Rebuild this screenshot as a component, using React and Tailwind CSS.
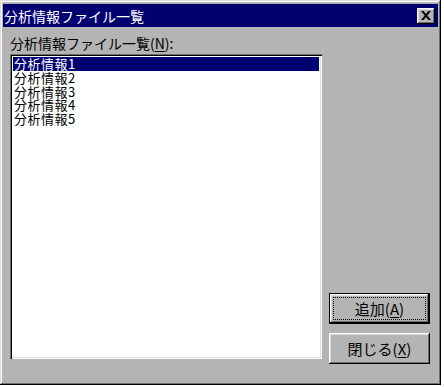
const FONT = { fontFamily: '"Noto Sans CJK JP", "Noto Sans", sans-serif' };

const items = ['分析情報1', '分析情報2', '分析情報3', '分析情報4', '分析情報5'];

function Button({ children, isDefault }) {
  if (isDefault) {
    return (
      <div className="w-[101px] h-[31px] bg-black p-px">
        <div className="w-full h-full bg-[#b4b4b4] p-[3px] shadow-[inset_-1px_-1px_#000,inset_1px_1px_#fff,inset_-2px_-2px_#6e6e6e,inset_2px_2px_#dcdcdc]">
          <div className="w-full h-full border border-dotted border-black flex items-center justify-center text-[15px] text-black leading-none">
            {children}
          </div>
        </div>
      </div>
    );
  }
  return (
    <div className="w-[101px] h-[31px] bg-[#b4b4b4] flex items-center justify-center text-[15px] text-black leading-none shadow-[inset_-1px_-1px_#000,inset_1px_1px_#fff,inset_-2px_-2px_#6e6e6e,inset_2px_2px_#dcdcdc]">
      {children}
    </div>
  );
}

export default function App() {
  return (
    <div className="w-[444px] h-[387px] bg-white" style={FONT}>
      <div className="w-[441px] h-[385px] bg-[#b4b4b4] p-[3px] flex flex-col shadow-[inset_-1px_-1px_#000,inset_1px_1px_#dcdcdc,inset_-2px_-2px_#6e6e6e,inset_2px_2px_#fff]">
        {/* title bar */}
        <div className="mt-px h-[23px] bg-[#000070] flex items-center justify-between pl-[1px] pr-[3px]">
          <span className="text-white text-[14px] leading-none">分析情報ファイル一覧</span>
          <div className="w-[18px] h-[16px] bg-[#b4b4b4] flex items-center justify-center shadow-[inset_-1px_-1px_#000,inset_1px_1px_#fff,inset_-2px_-2px_#6e6e6e,inset_2px_2px_#dcdcdc]">
            <svg width="10" height="9" viewBox="0 0 10 9">
              <path d="M0 0h2.6l2.4 3 2.4-3h2.6l-3.7 4.5 3.7 4.5h-2.6l-2.4-3-2.4 3h-2.6l3.7-4.5z" fill="#000" />
            </svg>
          </div>
        </div>

        <div className="flex-1 flex flex-col pl-[7px] pr-[8px]">
          <div className="mt-[8px] h-[16px] text-[14px] leading-[16px] text-black">
            分析情報ファイル一覧(<span className="underline underline-offset-2">N</span>):
          </div>

          <div className="mt-[3px] flex items-end gap-[7px]">
            <div className="w-[312px] h-[305px] bg-white p-[3px] shadow-[inset_1px_1px_#6e6e6e,inset_2px_2px_#000,inset_-1px_-1px_#fff,inset_-2px_-2px_#dcdcdc]">
              {items.map((item, i) => (
                <div
                  key={item}
                  className={
                    i === 0
                      ? 'h-[14px] bg-[#000070] text-white text-[13px] leading-[14px] tracking-[0.5px] pl-[1px]'
                      : 'h-[13.5px] text-black text-[13px] leading-[13.5px] tracking-[0.5px] pl-[1px]'
                  }
                >
                  {item}
                </div>
              ))}
            </div>

            <div className="flex flex-col gap-[9px] mb-[-5px]">
              <Button isDefault>
                追加(<span className="underline underline-offset-2">A</span>)
              </Button>
              <Button>
                閉じる(<span className="underline underline-offset-2">X</span>)
              </Button>
            </div>
          </div>
        </div>
      </div>
    </div>
  );
}
